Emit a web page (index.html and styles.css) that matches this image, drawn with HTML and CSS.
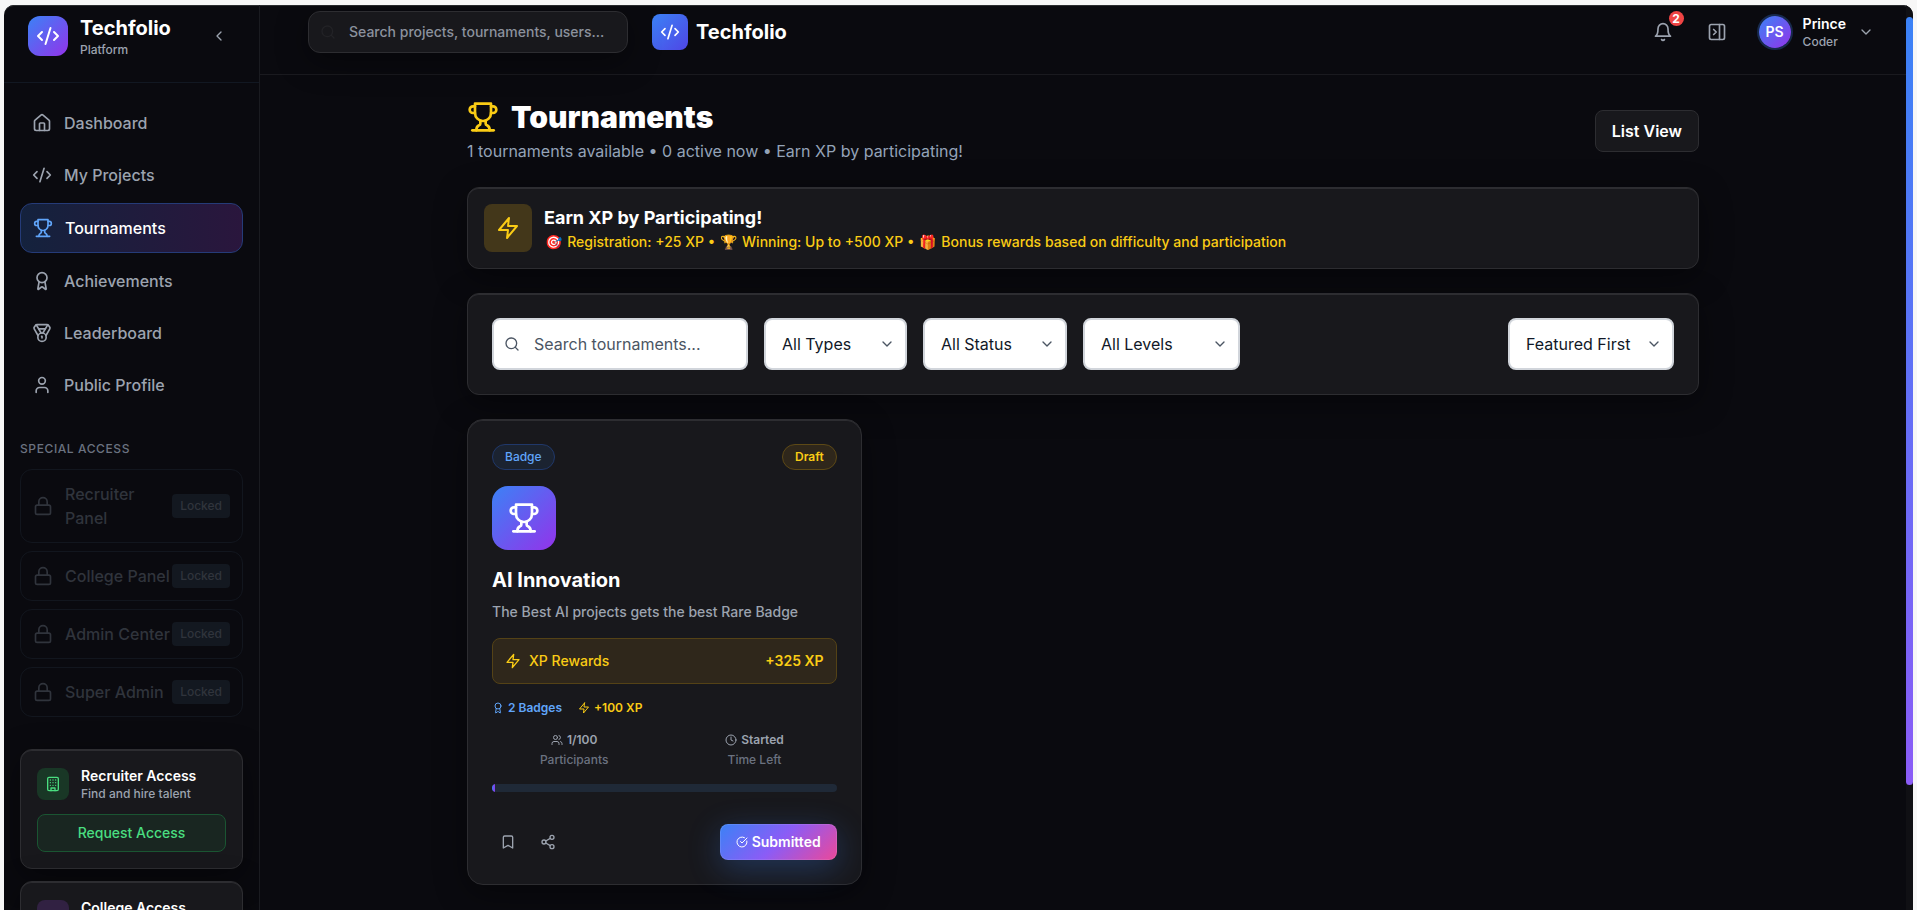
FILE: index.html
```
<!DOCTYPE html>
<html lang="en">
<head>
  <meta charset="UTF-8" />
  <meta name="viewport" content="width=device-width, initial-scale=1.0" />
  <title>Tournaments | Techfolio</title>
  <link rel="stylesheet" href="styles.css">
</head>
<body>
  <!-- icon sprite -->
  <svg class="sprite" aria-hidden="true">
    <symbol id="i-code" viewBox="0 0 24 24"><path d="m18 16 4-4-4-4"/><path d="m6 8-4 4 4 4"/><path d="m14.5 4-5 16"/></symbol>
    <symbol id="i-left" viewBox="0 0 24 24"><path d="m15 18-6-6 6-6"/></symbol>
    <symbol id="i-down" viewBox="0 0 24 24"><path d="m6 9 6 6 6-6"/></symbol>
    <symbol id="i-search" viewBox="0 0 24 24"><circle cx="11" cy="11" r="8"/><path d="m21 21-4.3-4.3"/></symbol>
    <symbol id="i-home" viewBox="0 0 24 24"><path d="M15 21v-8a1 1 0 0 0-1-1h-4a1 1 0 0 0-1 1v8"/><path d="M3 10a2 2 0 0 1 .709-1.528l7-5.999a2 2 0 0 1 2.582 0l7 5.999A2 2 0 0 1 21 10v9a2 2 0 0 1-2 2H5a2 2 0 0 1-2-2z"/></symbol>
    <symbol id="i-trophy" viewBox="0 0 24 24"><path d="M6 9H4.5a2.5 2.5 0 0 1 0-5H6"/><path d="M18 9h1.5a2.5 2.5 0 0 0 0-5H18"/><path d="M4 22h16"/><path d="M10 14.66V17c0 .55-.47.98-.97 1.21C7.85 18.75 7 20.24 7 22"/><path d="M14 14.66V17c0 .55.47.98.97 1.21C16.15 18.75 17 20.24 17 22"/><path d="M18 2H6v7a6 6 0 0 0 12 0V2Z"/></symbol>
    <symbol id="i-award" viewBox="0 0 24 24"><path d="m15.477 12.89 1.515 8.526a.5.5 0 0 1-.81.47l-3.58-2.687a1 1 0 0 0-1.197 0l-3.586 2.686a.5.5 0 0 1-.81-.469l1.514-8.526"/><circle cx="12" cy="8" r="6"/></symbol>
    <symbol id="i-medal" viewBox="0 0 24 24"><path d="M7.21 15 2.66 7.14a2 2 0 0 1 .13-2.2L4.4 2.8A2 2 0 0 1 6 2h12a2 2 0 0 1 1.6.8l1.6 2.14a2 2 0 0 1 .14 2.2L16.79 15"/><path d="M11 12 5.12 2.2"/><path d="m13 12 5.88-9.8"/><path d="M8 7h8"/><circle cx="12" cy="17" r="5"/><path d="M12 18v-2h-.5"/></symbol>
    <symbol id="i-user" viewBox="0 0 24 24"><path d="M19 21v-2a4 4 0 0 0-4-4H9a4 4 0 0 0-4 4v2"/><circle cx="12" cy="7" r="4"/></symbol>
    <symbol id="i-users" viewBox="0 0 24 24"><path d="M16 21v-2a4 4 0 0 0-4-4H6a4 4 0 0 0-4 4v2"/><circle cx="9" cy="7" r="4"/><path d="M22 21v-2a4 4 0 0 0-3-3.87"/><path d="M16 3.13a4 4 0 0 1 0 7.75"/></symbol>
    <symbol id="i-lock" viewBox="0 0 24 24"><rect width="18" height="11" x="3" y="11" rx="2"/><path d="M7 11V7a5 5 0 0 1 10 0v4"/></symbol>
    <symbol id="i-building" viewBox="0 0 24 24"><rect width="16" height="20" x="4" y="2" rx="2"/><path d="M9 22v-4h6v4"/><path d="M8 6h.01M16 6h.01M12 6h.01M12 10h.01M12 14h.01M16 10h.01M16 14h.01M8 10h.01M8 14h.01"/></symbol>
    <symbol id="i-cap" viewBox="0 0 24 24"><path d="M21.42 10.922a1 1 0 0 0-.019-1.838L12.83 5.18a2 2 0 0 0-1.66 0L2.6 9.08a1 1 0 0 0 0 1.832l8.57 3.908a2 2 0 0 0 1.66 0z"/><path d="M22 10v6"/><path d="M6 12.5V16a6 3 0 0 0 12 0v-3.5"/></symbol>
    <symbol id="i-bell" viewBox="0 0 24 24"><path d="M6 8a6 6 0 0 1 12 0c0 7 3 9 3 9H3s3-2 3-9"/><path d="M10.3 21a1.94 1.94 0 0 0 3.4 0"/></symbol>
    <symbol id="i-panel" viewBox="0 0 24 24"><rect width="18" height="18" x="3" y="3" rx="2"/><path d="M15 3v18"/><path d="m8 9 3 3-3 3"/></symbol>
    <symbol id="i-zap" viewBox="0 0 24 24"><path d="M13 2 3 14h9l-1 8 10-12h-9l1-8z"/></symbol>
    <symbol id="i-clock" viewBox="0 0 24 24"><circle cx="12" cy="12" r="10"/><path d="M12 6v6l4 2"/></symbol>
    <symbol id="i-bookmark" viewBox="0 0 24 24"><path d="m19 21-7-4-7 4V5a2 2 0 0 1 2-2h10a2 2 0 0 1 2 2v16z"/></symbol>
    <symbol id="i-share" viewBox="0 0 24 24"><circle cx="18" cy="5" r="3"/><circle cx="6" cy="12" r="3"/><circle cx="18" cy="19" r="3"/><path d="m8.59 13.51 6.83 3.98"/><path d="m15.41 6.51-6.82 3.98"/></symbol>
    <symbol id="i-check" viewBox="0 0 24 24"><path d="M21.801 10A10 10 0 1 1 17 3.335"/><path d="m9 11 3 3L22 4"/></symbol>
  </svg>

  <div class="app">
    <aside class="sidebar">
      <div class="brand">
        <span class="brand-logo"><svg class="icon icon-24"><use href="#i-code"/></svg></span>
        <div class="brand-text">
          <strong>Techfolio</strong>
          <span>Platform</span>
        </div>
        <button class="collapse" aria-label="Collapse sidebar"><svg class="icon icon-16"><use href="#i-left"/></svg></button>
      </div>

      <div class="sidebar-body">
        <nav class="nav">
          <a href="#"><svg class="icon icon-20"><use href="#i-home"/></svg>Dashboard</a>
          <a href="#"><svg class="icon icon-20"><use href="#i-code"/></svg>My Projects</a>
          <a href="#" class="active"><svg class="icon icon-20"><use href="#i-trophy"/></svg>Tournaments</a>
          <a href="#"><svg class="icon icon-20"><use href="#i-award"/></svg>Achievements</a>
          <a href="#"><svg class="icon icon-20"><use href="#i-medal"/></svg>Leaderboard</a>
          <a href="#"><svg class="icon icon-20"><use href="#i-user"/></svg>Public Profile</a>
        </nav>

        <section class="special">
          <h2>Special Access</h2>
          <div class="locked"><svg class="icon icon-20"><use href="#i-lock"/></svg><span>Recruiter Panel</span><em>Locked</em></div>
          <div class="locked"><svg class="icon icon-20"><use href="#i-lock"/></svg><span>College Panel</span><em>Locked</em></div>
          <div class="locked"><svg class="icon icon-20"><use href="#i-lock"/></svg><span>Admin Center</span><em>Locked</em></div>
          <div class="locked"><svg class="icon icon-20"><use href="#i-lock"/></svg><span>Super Admin</span><em>Locked</em></div>
        </section>

        <section class="access">
          <div class="panel access-card green">
            <div class="access-head">
              <span class="access-icon"><svg class="icon icon-16"><use href="#i-building"/></svg></span>
              <div>
                <h3>Recruiter Access</h3>
                <p>Find and hire talent</p>
              </div>
            </div>
            <button>Request Access</button>
          </div>
          <div class="panel access-card purple">
            <div class="access-head">
              <span class="access-icon"><svg class="icon icon-16"><use href="#i-cap"/></svg></span>
              <div>
                <h3>College Access</h3>
                <p>Manage students</p>
              </div>
            </div>
            <button>Request Access</button>
          </div>
        </section>
      </div>
    </aside>

    <div class="content">
      <header class="topbar">
        <div class="top-search">
          <svg class="icon icon-16"><use href="#i-search"/></svg>
          <input type="text" placeholder="Search projects, tournaments, users..." aria-label="Search projects, tournaments, users">
        </div>
        <a href="#" class="top-brand">
          <span class="top-logo"><svg class="icon icon-20"><use href="#i-code"/></svg></span>
          Techfolio
        </a>
        <div class="top-actions">
          <button class="icon-btn" aria-label="Notifications">
            <svg class="icon icon-20"><use href="#i-bell"/></svg>
            <span class="count">2</span>
          </button>
          <button class="icon-btn" aria-label="Toggle panel"><svg class="icon icon-20"><use href="#i-panel"/></svg></button>
          <button class="user">
            <span class="avatar">PS</span>
            <span class="user-text"><strong>Prince</strong><small>Coder</small></span>
            <svg class="icon icon-16"><use href="#i-down"/></svg>
          </button>
        </div>
      </header>

      <main>
        <div class="page-head">
          <div>
            <h1><svg class="icon icon-32"><use href="#i-trophy"/></svg>Tournaments</h1>
            <p>1 tournaments available • 0 active now • Earn XP by participating!</p>
          </div>
          <button class="view-btn">List View</button>
        </div>

        <section class="panel banner">
          <span class="banner-icon"><svg class="icon icon-24"><use href="#i-zap"/></svg></span>
          <div>
            <h2>Earn XP by Participating!</h2>
            <p><span class="emoji">🎯</span> Registration: +25 XP • <span class="emoji">🏆</span> Winning: Up to +500 XP • <span class="emoji">🎁</span> Bonus rewards based on difficulty and participation</p>
          </div>
        </section>

        <section class="panel filters">
          <div class="filter-search">
            <svg class="icon icon-16"><use href="#i-search"/></svg>
            <input type="text" placeholder="Search tournaments..." aria-label="Search tournaments">
          </div>
          <div class="select types">
            <select aria-label="Type"><option>All Types</option></select>
            <svg class="icon icon-16"><use href="#i-down"/></svg>
          </div>
          <div class="select status">
            <select aria-label="Status"><option>All Status</option></select>
            <svg class="icon icon-16"><use href="#i-down"/></svg>
          </div>
          <div class="select levels">
            <select aria-label="Level"><option>All Levels</option></select>
            <svg class="icon icon-16"><use href="#i-down"/></svg>
          </div>
          <div class="select sort">
            <select aria-label="Sort"><option>Featured First</option></select>
            <svg class="icon icon-16"><use href="#i-down"/></svg>
          </div>
        </section>

        <section class="grid">
          <article class="panel card">
            <div class="row">
              <span class="pill blue">Badge</span>
              <span class="pill yellow">Draft</span>
            </div>
            <span class="card-icon"><svg class="icon icon-32"><use href="#i-trophy"/></svg></span>
            <h3>AI Innovation</h3>
            <p class="desc">The Best AI projects gets the best Rare Badge</p>
            <div class="rewards">
              <svg class="icon icon-16"><use href="#i-zap"/></svg>
              <span>XP Rewards</span>
              <strong>+325 XP</strong>
            </div>
            <div class="perks">
              <span class="perk-blue"><svg class="icon icon-12"><use href="#i-award"/></svg>2 Badges</span>
              <span class="perk-yellow"><svg class="icon icon-12"><use href="#i-zap"/></svg>+100 XP</span>
            </div>
            <div class="stats">
              <div>
                <strong><svg class="icon icon-12"><use href="#i-users"/></svg>1/100</strong>
                <span>Participants</span>
              </div>
              <div>
                <strong><svg class="icon icon-12"><use href="#i-clock"/></svg>Started</strong>
                <span>Time Left</span>
              </div>
            </div>
            <div class="progress"><div class="progress-fill" style="width: 1%"></div></div>
            <div class="row actions">
              <div class="tools">
                <button aria-label="Bookmark"><svg class="icon icon-16"><use href="#i-bookmark"/></svg></button>
                <button aria-label="Share"><svg class="icon icon-16"><use href="#i-share"/></svg></button>
              </div>
              <button class="submit-btn"><svg class="icon icon-12"><use href="#i-check"/></svg>Submitted</button>
            </div>
          </article>
        </section>
      </main>
    </div>

    <div class="scroll-track"><div class="scroll-thumb"></div></div>
  </div>
</body>
</html>
```
FILE: styles.css
```
* {
  box-sizing: border-box;
  margin: 0;
  padding: 0;
}
body {
  font-family: 'Inter', "Noto Color Emoji", sans-serif;
  font-size: 16px;
  line-height: 24px;
  background: #f7f7f7;
  color: #fff;
  height: 100vh;
  padding: 5px 4px 0;
  overflow: hidden;
}
button, input, select {
  font: inherit;
  color: inherit;
}
button {
  background: none;
  border: none;
  cursor: pointer;
}
a {
  color: inherit;
  text-decoration: none;
}
.sprite {
  display: none;
}
.icon {
  flex: none;
  display: block;
  fill: none;
  stroke: currentColor;
  stroke-width: 2;
  stroke-linecap: round;
  stroke-linejoin: round;
}
.icon-12 { width: 12px; height: 12px; }
.icon-16 { width: 16px; height: 16px; }
.icon-20 { width: 20px; height: 20px; }
.icon-24 { width: 24px; height: 24px; }
.icon-32 { width: 32px; height: 32px; }

.app {
  display: flex;
  height: 100%;
  background: #0a0a0f;
  border-radius: 10px 10px 0 0;
  overflow: hidden;
  box-shadow: inset 0 1px 0 #2b2d30;
}
.panel {
  background: #18181c;
  border: 1px solid #2d2d31;
  border-radius: 12px;
  box-shadow: 0 8px 32px rgba(0,0,0,0.4), inset 0 1px 0 #2d2d31;
}

/* sidebar */
.sidebar {
  flex: none;
  width: 256px;
  border-right: 1px solid #1a1b20;
  overflow: hidden;
}
.brand {
  display: flex;
  align-items: center;
  gap: 12px;
  padding: 9px 24px 24px;
  border-bottom: 1px solid #121822;
}
.brand-logo {
  display: grid;
  place-items: center;
  width: 40px;
  height: 40px;
  border-radius: 12px;
  background: linear-gradient(135deg, #3b82f6, #9333ea);
}
.brand-text {
  flex: 1;
}
.brand-text strong {
  display: block;
  font-size: 20px;
  line-height: 28px;
}
.brand-text span {
  display: block;
  font-size: 12px;
  line-height: 16px;
  font-weight: 500;
  color: #9ca3af;
}
.collapse {
  padding: 8px;
  color: #9ca3af;
}
.sidebar-body {
  padding: 16px;
}
.nav {
  display: flex;
  flex-direction: column;
  gap: 4px;
}
.nav a {
  display: flex;
  align-items: center;
  gap: 12px;
  padding: 12px;
  border-radius: 12px;
  font-weight: 500;
  color: #9ca3af;
}
.nav a.active {
  color: #fff;
  border: 1px solid #253b78;
  background: linear-gradient(90deg, #14223d, #2a163d);
}
.nav a.active .icon {
  color: #60a5fa;
}
.special {
  display: flex;
  flex-direction: column;
  gap: 8px;
  margin-top: 32px;
}
.special h2 {
  font-size: 12px;
  line-height: 16px;
  font-weight: 500;
  letter-spacing: 0.05em;
  text-transform: uppercase;
  color: #6b7280;
  margin-bottom: 4px;
}
.locked {
  display: flex;
  align-items: center;
  padding: 12px;
  border: 1px solid #12161e;
  border-radius: 12px;
  font-weight: 500;
  color: #30343c;
}
.locked span {
  flex: 1;
  min-width: 0;
  margin-left: 12px;
}
.locked em {
  flex: none;
  padding: 4px 8px;
  border-radius: 4px;
  background: #131820;
  font-size: 12px;
  line-height: 16px;
  font-style: normal;
}
.access {
  display: flex;
  flex-direction: column;
  gap: 12px;
  margin-top: 32px;
}
.access-card {
  padding: 16px;
}
.access-head {
  display: flex;
  align-items: center;
  gap: 12px;
  margin-bottom: 12px;
}
.access-icon {
  display: grid;
  place-items: center;
  width: 32px;
  height: 32px;
  border-radius: 8px;
}
.access-card h3 {
  font-size: 14px;
  line-height: 20px;
  font-weight: 600;
}
.access-card p {
  font-size: 12px;
  line-height: 16px;
  font-weight: 500;
  color: #9ca3af;
}
.access-card button {
  display: block;
  width: 100%;
  padding: 8px;
  border: 1px solid;
  border-radius: 8px;
  font-size: 14px;
  line-height: 20px;
  font-weight: 500;
}
.green .access-icon { background: #193726; color: #4ade80; }
.green button { background: #192621; color: #4ade80; border-color: #1a5532; }
.purple .access-icon { background: #312142; color: #c084fc; }
.purple button { background: #241c30; color: #c084fc; border-color: #4c2a6e; }

/* top bar */
.content {
  flex: 1;
  min-width: 0;
}
.topbar {
  display: flex;
  align-items: center;
  gap: 24px;
  padding: 6px 24px 21px 48px;
  border-bottom: 1px solid #1a1a1f;
}
.top-search {
  position: relative;
  width: 320px;
}
.top-search .icon {
  position: absolute;
  left: 12px;
  top: 13px;
  color: #222226;
}
.top-search input {
  display: block;
  width: 100%;
  padding: 10px 16px 10px 40px;
  border: 1px solid #2d2d31;
  border-radius: 12px;
  background: #18181c;
  box-shadow: 0 8px 32px rgba(0,0,0,0.4);
  font-size: 14px;
  line-height: 20px;
  font-weight: 500;
}
.top-search input::placeholder {
  color: #8b919d;
}
.top-brand {
  display: flex;
  align-items: center;
  gap: 8px;
  font-size: 20px;
  font-weight: 700;
}
.top-logo {
  display: grid;
  place-items: center;
  width: 36px;
  height: 36px;
  border-radius: 8px;
  background: linear-gradient(135deg, #3b82f6, #4f46e5);
}
.top-actions {
  display: flex;
  align-items: center;
  gap: 16px;
  margin-left: auto;
}
.icon-btn {
  position: relative;
  padding: 9px;
  color: #9ca3af;
}
.count {
  position: absolute;
  top: -2px;
  right: -2px;
  width: 15px;
  height: 15px;
  border-radius: 50%;
  background: #ef4444;
  color: #fff;
  font-size: 12px;
  line-height: 15px;
  font-weight: 700;
  text-align: center;
}
.user {
  display: flex;
  align-items: center;
  gap: 12px;
  padding: 0 8px 0 7px;
  text-align: left;
  color: #9ca3af;
}
.avatar {
  width: 32px;
  height: 32px;
  border-radius: 50%;
  background: linear-gradient(135deg, #3b82f6, #9333ea);
  box-shadow: 0 0 0 2px #172a4c;
  color: #fff;
  font-size: 14px;
  line-height: 32px;
  font-weight: 600;
  text-align: center;
}
.user-text strong {
  display: block;
  font-size: 14px;
  line-height: 20px;
  font-weight: 600;
  color: #fff;
}
.user-text small {
  display: block;
  font-size: 12px;
  line-height: 16px;
  font-weight: 500;
}

/* page */
main {
  max-width: 1280px;
  margin: 0 auto;
  padding: 24px;
  display: flex;
  flex-direction: column;
  gap: 24px;
}
.page-head {
  display: flex;
  align-items: center;
  justify-content: space-between;
}
h1 {
  display: flex;
  align-items: center;
  gap: 12px;
  font-size: 30px;
  line-height: 36px;
  font-weight: 900;
}
h1 .icon {
  color: #facc15;
}
.page-head p {
  margin-top: 4px;
  color: #94a3b8;
}
.view-btn {
  padding: 8px 16px;
  border: 1px solid #2d2d31;
  border-radius: 8px;
  background: #18181c;
  font-weight: 600;
}
.banner {
  display: flex;
  align-items: center;
  gap: 12px;
  padding: 16px;
}
.banner-icon {
  display: grid;
  place-items: center;
  width: 48px;
  height: 48px;
  border-radius: 8px;
  background: #43371a;
  color: #facc15;
}
.banner h2 {
  font-size: 18px;
  line-height: 28px;
  font-weight: 700;
}
.banner p {
  font-size: 14px;
  line-height: 20px;
  font-weight: 500;
  color: #facc15;
}
.emoji {
  padding: 0 1px;
}
.filters {
  display: flex;
  gap: 16px;
  padding: 24px;
}
.filter-search,
.select {
  position: relative;
}
.filter-search .icon {
  position: absolute;
  left: 12px;
  top: 18px;
  color: #4b5563;
}
.filter-search {
  width: 256px;
}
.filter-search input,
.select select {
  display: block;
  width: 100%;
  height: 52px;
  border: 2px solid #d1d5db;
  border-radius: 8px;
  background: #fff;
  color: #111827;
}
.filter-search input {
  padding: 0 16px 0 40px;
}
.filter-search input::placeholder {
  color: #4b5563;
}
.select select {
  appearance: none;
  padding: 0 40px 0 16px;
}
.sort select {
  padding-right: 24px;
}
.select .icon {
  position: absolute;
  right: 12px;
  top: 18px;
  color: #4b5563;
  pointer-events: none;
}
.types { width: 143px; }
.status { width: 144px; }
.levels { width: 157px; }
.sort { width: 166px; margin-left: auto; }

/* tournament card */
.grid {
  display: grid;
  grid-template-columns: repeat(3, 1fr);
  gap: 24px;
}
.card {
  padding: 24px;
  border-radius: 16px;
}
.row {
  display: flex;
  align-items: center;
  justify-content: space-between;
}
.pill {
  padding: 4px 12px;
  border: 1px solid;
  border-radius: 13px;
  font-size: 12px;
  line-height: 16px;
  font-weight: 600;
}
.pill.blue { background: #1b2331; color: #60a5fa; border-color: #20386a; font-weight: 500; }
.pill.yellow { background: #2f271b; color: #facc15; border-color: #5d4916; }
.card-icon {
  display: grid;
  place-items: center;
  width: 64px;
  height: 64px;
  margin: 16px 0;
  border-radius: 16px;
  background: linear-gradient(135deg, #3b82f6, #9333ea);
}
.card h3 {
  font-size: 20px;
  line-height: 28px;
  font-weight: 700;
}
.desc {
  margin: 8px 0 16px;
  font-size: 14px;
  line-height: 20px;
  font-weight: 500;
  color: #9ca3af;
}
.rewards {
  display: flex;
  align-items: center;
  gap: 8px;
  padding: 12px;
  border: 1px solid #544216;
  border-radius: 8px;
  background: #2f271b;
  color: #facc15;
  font-size: 14px;
  line-height: 20px;
  font-weight: 500;
}
.rewards strong {
  margin-left: auto;
  font-weight: 600;
}
.perks {
  display: flex;
  gap: 16px;
  margin: 16px 0;
  font-size: 12px;
  line-height: 16px;
  font-weight: 600;
}
.perks span,
.stats strong {
  display: flex;
  align-items: center;
  gap: 4px;
}
.perk-blue { color: #60a5fa; }
.perk-yellow { color: #facc15; }
.stats {
  display: grid;
  grid-template-columns: 1fr 1fr;
  gap: 16px;
  font-size: 12px;
  line-height: 16px;
  font-weight: 500;
  text-align: center;
  color: #6b7280;
}
.stats strong {
  justify-content: center;
  margin-bottom: 4px;
  font-weight: 600;
  color: #9ca3af;
}
.progress {
  height: 8px;
  margin: 16px 0 32px;
  border-radius: 4px;
  background: #1f2937;
  overflow: hidden;
}
.progress-fill {
  height: 100%;
  background: linear-gradient(90deg, #3b82f6, #9333ea);
}
.tools {
  display: flex;
  gap: 8px;
}
.tools button {
  padding: 8px;
  color: #9ca3af;
}
.submit-btn {
  display: flex;
  align-items: center;
  gap: 4px;
  padding: 8px 16px;
  border-radius: 8px;
  background: linear-gradient(135deg, #3b82f6 0%, #8b5cf6 50%, #ec4899 100%);
  box-shadow: 0 8px 32px rgba(59,130,246,0.3), inset 0 0 0 1px rgba(255,255,255,0.1);
  font-size: 14px;
  line-height: 20px;
  font-weight: 600;
}

/* scrollbar */
.scroll-track {
  flex: none;
  width: 7px;
  padding-top: 12px;
  background: #101014;
}
.scroll-thumb {
  height: 86%;
  border-radius: 4px;
  background: linear-gradient(180deg, #3b82f6, #8b5cf6);
}
```
